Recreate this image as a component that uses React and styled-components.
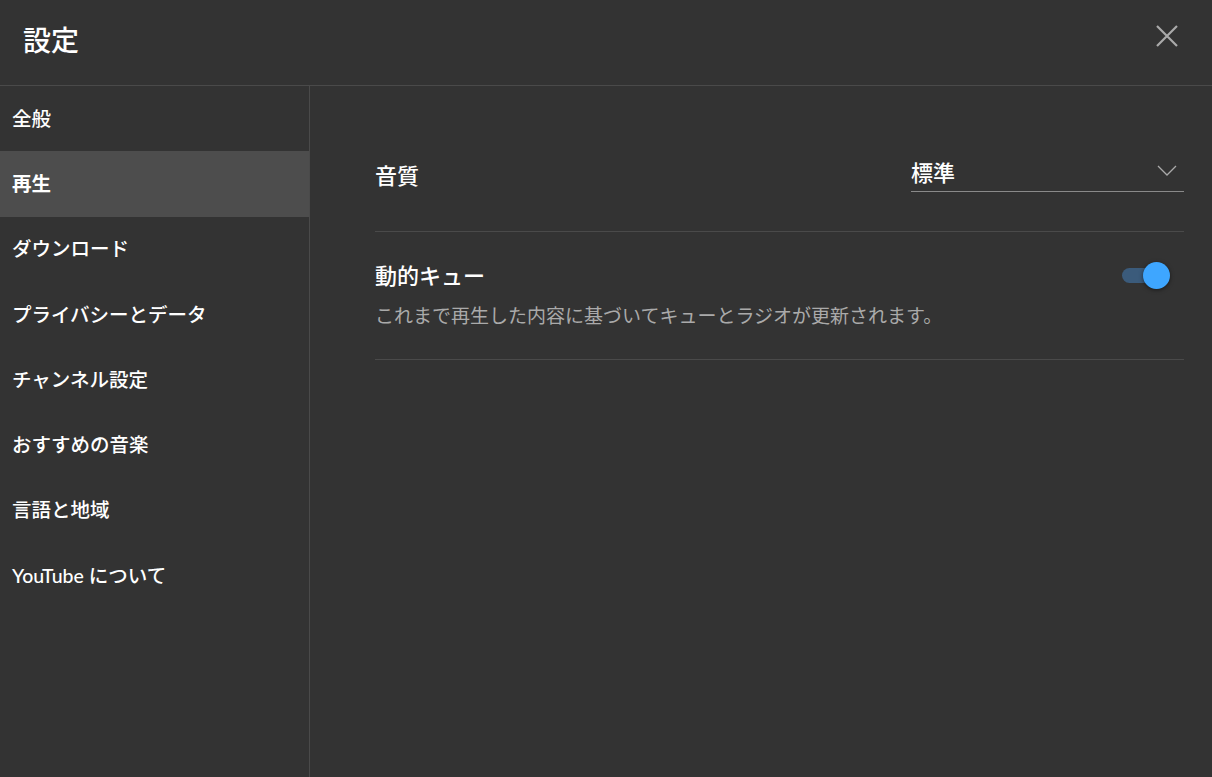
import React from "react";
import styled, { createGlobalStyle } from "styled-components";

const Global = createGlobalStyle`
  html, body { margin: 0; padding: 0; background: #333333; }
  body { font-family: Lato, "Noto Sans CJK JP", "Noto Sans", sans-serif; color: #fff; }
  * { box-sizing: border-box; }
`;

const Page = styled.div`
  width: 1212px;
  height: 777px;
  background: #333333;
  display: flex;
  flex-direction: column;
  overflow: hidden;
`;

const Header = styled.header`
  height: 86px;
  flex: none;
  display: flex;
  align-items: center;
  justify-content: space-between;
  padding: 0 33px 0 23px;
  border-bottom: 1px solid #4a4a4a;
`;

const Title = styled.h1`
  margin: 0;
  font-size: 28px;
  font-weight: 500;
  line-height: 34px;
  padding-bottom: 6px;
  color: #fff;
`;

const CloseButton = styled.button`
  background: none;
  border: none;
  padding: 0;
  margin-bottom: 14px;
  width: 24px;
  height: 24px;
  display: flex;
  cursor: pointer;
`;

const Body = styled.div`
  flex: 1;
  display: flex;
  min-height: 0;
`;

const Sidebar = styled.nav`
  width: 310px;
  flex: none;
  border-right: 1px solid #4a4a4a;
  display: flex;
  flex-direction: column;
`;

const NavItem = styled.div`
  height: 65.3px;
  display: flex;
  align-items: center;
  padding: 0 0 3px 12px;
  font-size: 19.5px;
  font-weight: ${(p) => (p.$active ? 700 : 500)};
  color: #fff;
  background: ${(p) => (p.$active ? "#4d4d4d" : "transparent")};
`;

const Content = styled.main`
  flex: 1;
  padding: 36px 28px 0 65px;
`;

const Row = styled.section`
  display: flex;
  justify-content: space-between;
  align-items: flex-start;
  padding: ${(p) => p.$pad};
  border-bottom: 1px solid #4a4a4a;
`;

const TextCol = styled.div`
  display: flex;
  flex-direction: column;
`;

const Label = styled.div`
  font-size: 22px;
  line-height: 28px;
  font-weight: 500;
  color: #fff;
  margin-top: ${(p) => p.$offset || 0}px;
`;

const Sub = styled.div`
  font-size: 19px;
  line-height: 24px;
  color: #aaaaaa;
  margin-top: 14px;
`;

const Select = styled.div`
  width: 273px;
  height: 38px;
  display: flex;
  align-items: center;
  justify-content: space-between;
  border-bottom: 1px solid #8a8a8a;
  padding-bottom: 3px;
  font-size: 22px;
  font-weight: 500;
  color: #fff;
`;

const ToggleWrap = styled.div`
  position: relative;
  width: 50px;
  height: 28px;
  margin-right: 12px;
  margin-top: -1px;
  flex: none;
`;

const Track = styled.div`
  position: absolute;
  left: 0;
  top: 7px;
  width: 36px;
  height: 15px;
  border-radius: 8px;
  background: #3b5b7b;
`;

const Knob = styled.div`
  position: absolute;
  left: 21px;
  top: 1px;
  width: 27px;
  height: 27px;
  border-radius: 50%;
  background: #3ea6ff;
  box-shadow: 0 1px 4px rgba(0, 0, 0, 0.5);
`;

const navItems = [
  "全般",
  "再生",
  "ダウンロード",
  "プライバシーとデータ",
  "チャンネル設定",
  "おすすめの音楽",
  "言語と地域",
  "YouTube について",
];

export default function App() {
  return (
    <Page>
      <Global />
      <Header>
        <Title>設定</Title>
        <CloseButton aria-label="閉じる">
          <svg width="24" height="24" viewBox="0 0 24 24">
            <path d="M2 2 L22 22 M22 2 L2 22" stroke="#aaaaaa" strokeWidth="2.2" fill="none" />
          </svg>
        </CloseButton>
      </Header>
      <Body>
        <Sidebar>
          {navItems.map((t) => (
            <NavItem key={t} $active={t === "再生"}>
              {t}
            </NavItem>
          ))}
        </Sidebar>
        <Content>
          <Row $pad="32px 0 39px">
            <Label $offset={8}>音質</Label>
            <Select>
              <span>標準</span>
              <svg width="20" height="12" viewBox="0 0 20 12" style={{ marginRight: 7 }}>
                <path d="M1 1 L10 10 L19 1" stroke="#aaaaaa" strokeWidth="1.3" fill="none" />
              </svg>
            </Select>
          </Row>
          <Row $pad="30px 0 31px">
            <TextCol>
              <Label>動的キュー</Label>
              <Sub>これまで再生した内容に基づいてキューとラジオが更新されます。</Sub>
            </TextCol>
            <ToggleWrap>
              <Track />
              <Knob />
            </ToggleWrap>
          </Row>
        </Content>
      </Body>
    </Page>
  );
}
